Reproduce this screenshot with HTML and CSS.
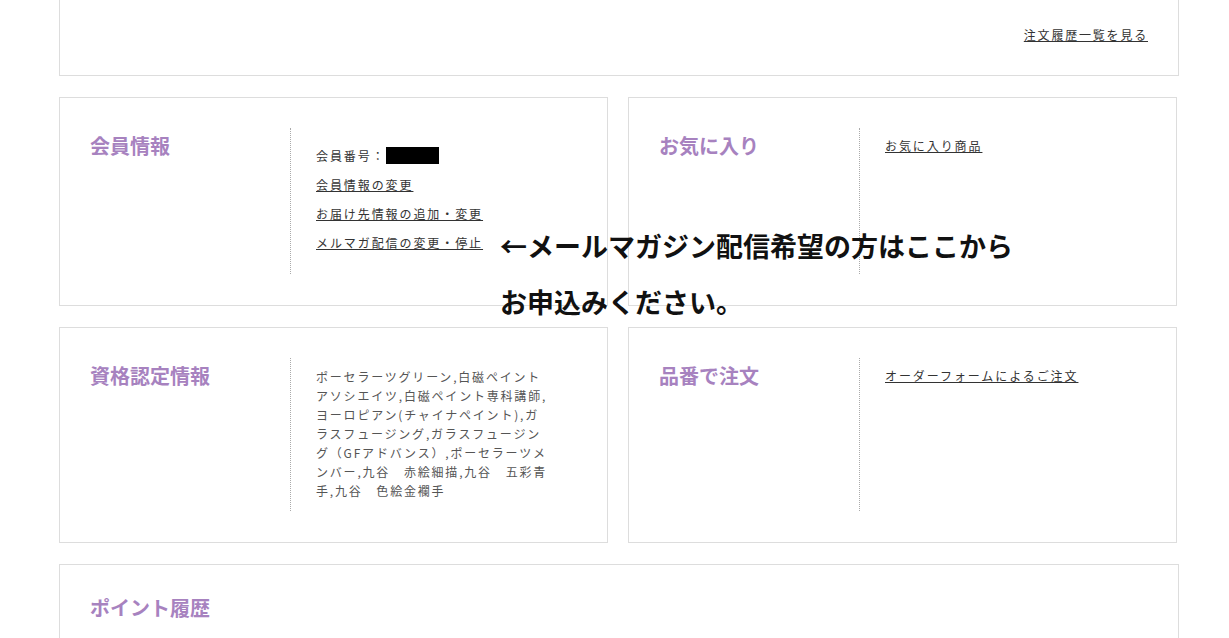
FILE: index.html
```html
<!DOCTYPE html>
<html lang="ja">
<head>
    <meta charset="UTF-8">
    <meta name="viewport" content="width=device-width, initial-scale=1.0">
    <title>マイページ</title>
    <link rel="stylesheet" href="styles.css">
</head>
<body>
    <div class="mypage">
        <div class="panel panel-history">
            <a href="#" class="history-link">注文履歴一覧を見る</a>
        </div>

        <div class="panel-row">
            <div class="panel">
                <h2 class="panel-title">会員情報</h2>
                <div class="panel-body">
                    <ul class="link-list member-list">
                        <li class="member-no">会員番号：<span class="redacted"></span></li>
                        <li><a href="#">会員情報の変更</a></li>
                        <li><a href="#">お届け先情報の追加・変更</a></li>
                        <li><a href="#">メルマガ配信の変更・停止</a></li>
                    </ul>
                </div>
            </div>
            <div class="panel">
                <h2 class="panel-title">お気に入り</h2>
                <div class="panel-body">
                    <ul class="link-list">
                        <li><a href="#">お気に入り商品</a></li>
                    </ul>
                </div>
            </div>
        </div>

        <div class="panel-row">
            <div class="panel">
                <h2 class="panel-title">資格認定情報</h2>
                <div class="panel-body">
                    <p class="license-text">ポーセラーツグリーン,白磁ペイントアソシエイツ,白磁ペイント専科講師,ヨーロピアン(チャイナペイント),ガラスフュージング,ガラスフュージング（GFアドバンス）,ポーセラーツメンバー,九谷　赤絵細描,九谷　五彩青手,九谷　色絵金襴手</p>
                </div>
            </div>
            <div class="panel">
                <h2 class="panel-title">品番で注文</h2>
                <div class="panel-body">
                    <ul class="link-list">
                        <li><a href="#">オーダーフォームによるご注文</a></li>
                    </ul>
                </div>
            </div>
        </div>

        <div class="panel panel-points">
            <h2 class="panel-title">ポイント履歴</h2>
        </div>

        <p class="mag-note">←メールマガジン配信希望の方はここから<br>お申込みください。</p>
    </div>
</body>
</html>
```

FILE: styles.css
```css
:root {
    --accent-color: #a782bf;
    --text-color: #444444;
    --link-color: #333333;
    --border-color: #dddddd;
}

body {
    margin: 0;
    padding: 0;
    background-color: #ffffff;
    font-family: "Noto Sans CJK JP", "Noto Sans", sans-serif;
    color: var(--text-color);
}

.mypage {
    position: relative;
    width: 1120px;
    margin-left: 59px;
}

.panel {
    display: flex;
    border: 1px solid var(--border-color);
    background-color: #ffffff;
    padding: 30px 30px 31px;
    margin-bottom: 21px;
    box-sizing: border-box;
}

.panel-history {
    border-top: none;
    justify-content: flex-end;
    padding: 25px 30px 30px;
    height: 76px;
}

.history-link {
    font-size: 12px;
    line-height: 20px;
    letter-spacing: 0.15em;
    color: var(--link-color);
}

.panel-row {
    display: flex;
    gap: 20px;
    width: 1118px;
}

.panel-row .panel {
    flex: 1;
}

.panel-title {
    flex: 0 0 200px;
    margin: 5px 0 0;
    font-size: 20px;
    line-height: 26px;
    font-weight: 700;
    color: var(--accent-color);
}

.panel-points {
    padding-bottom: 40px;
}

.panel-points .panel-title {
    margin-top: 0;
}

.panel-body {
    flex: 1;
    border-left: 1px dotted #aaaaaa;
    padding: 10px 0 12px 25px;
}

.link-list {
    list-style: none;
    margin: -7px 0 0;
    padding: 0;
}

.link-list li {
    font-size: 12px;
    line-height: 29px;
    letter-spacing: 0.16em;
    color: var(--link-color);
}

.link-list a {
    color: var(--link-color);
}

.member-list {
    margin-bottom: 5px;
}

.member-no {
    margin-top: 10px;
}

.redacted {
    display: inline-block;
    width: 53px;
    height: 17px;
    background-color: #000000;
    vertical-align: -3px;
}

.license-text {
    width: 234px;
    margin: -1px 0 -1px;
    font-size: 12px;
    line-height: 19px;
    letter-spacing: 0.15em;
    color: #555555;
}

.mag-note {
    position: absolute;
    left: 441px;
    top: 218px;
    margin: 0;
    font-size: 27px;
    line-height: 56px;
    font-weight: 700;
    color: #111111;
}
```
